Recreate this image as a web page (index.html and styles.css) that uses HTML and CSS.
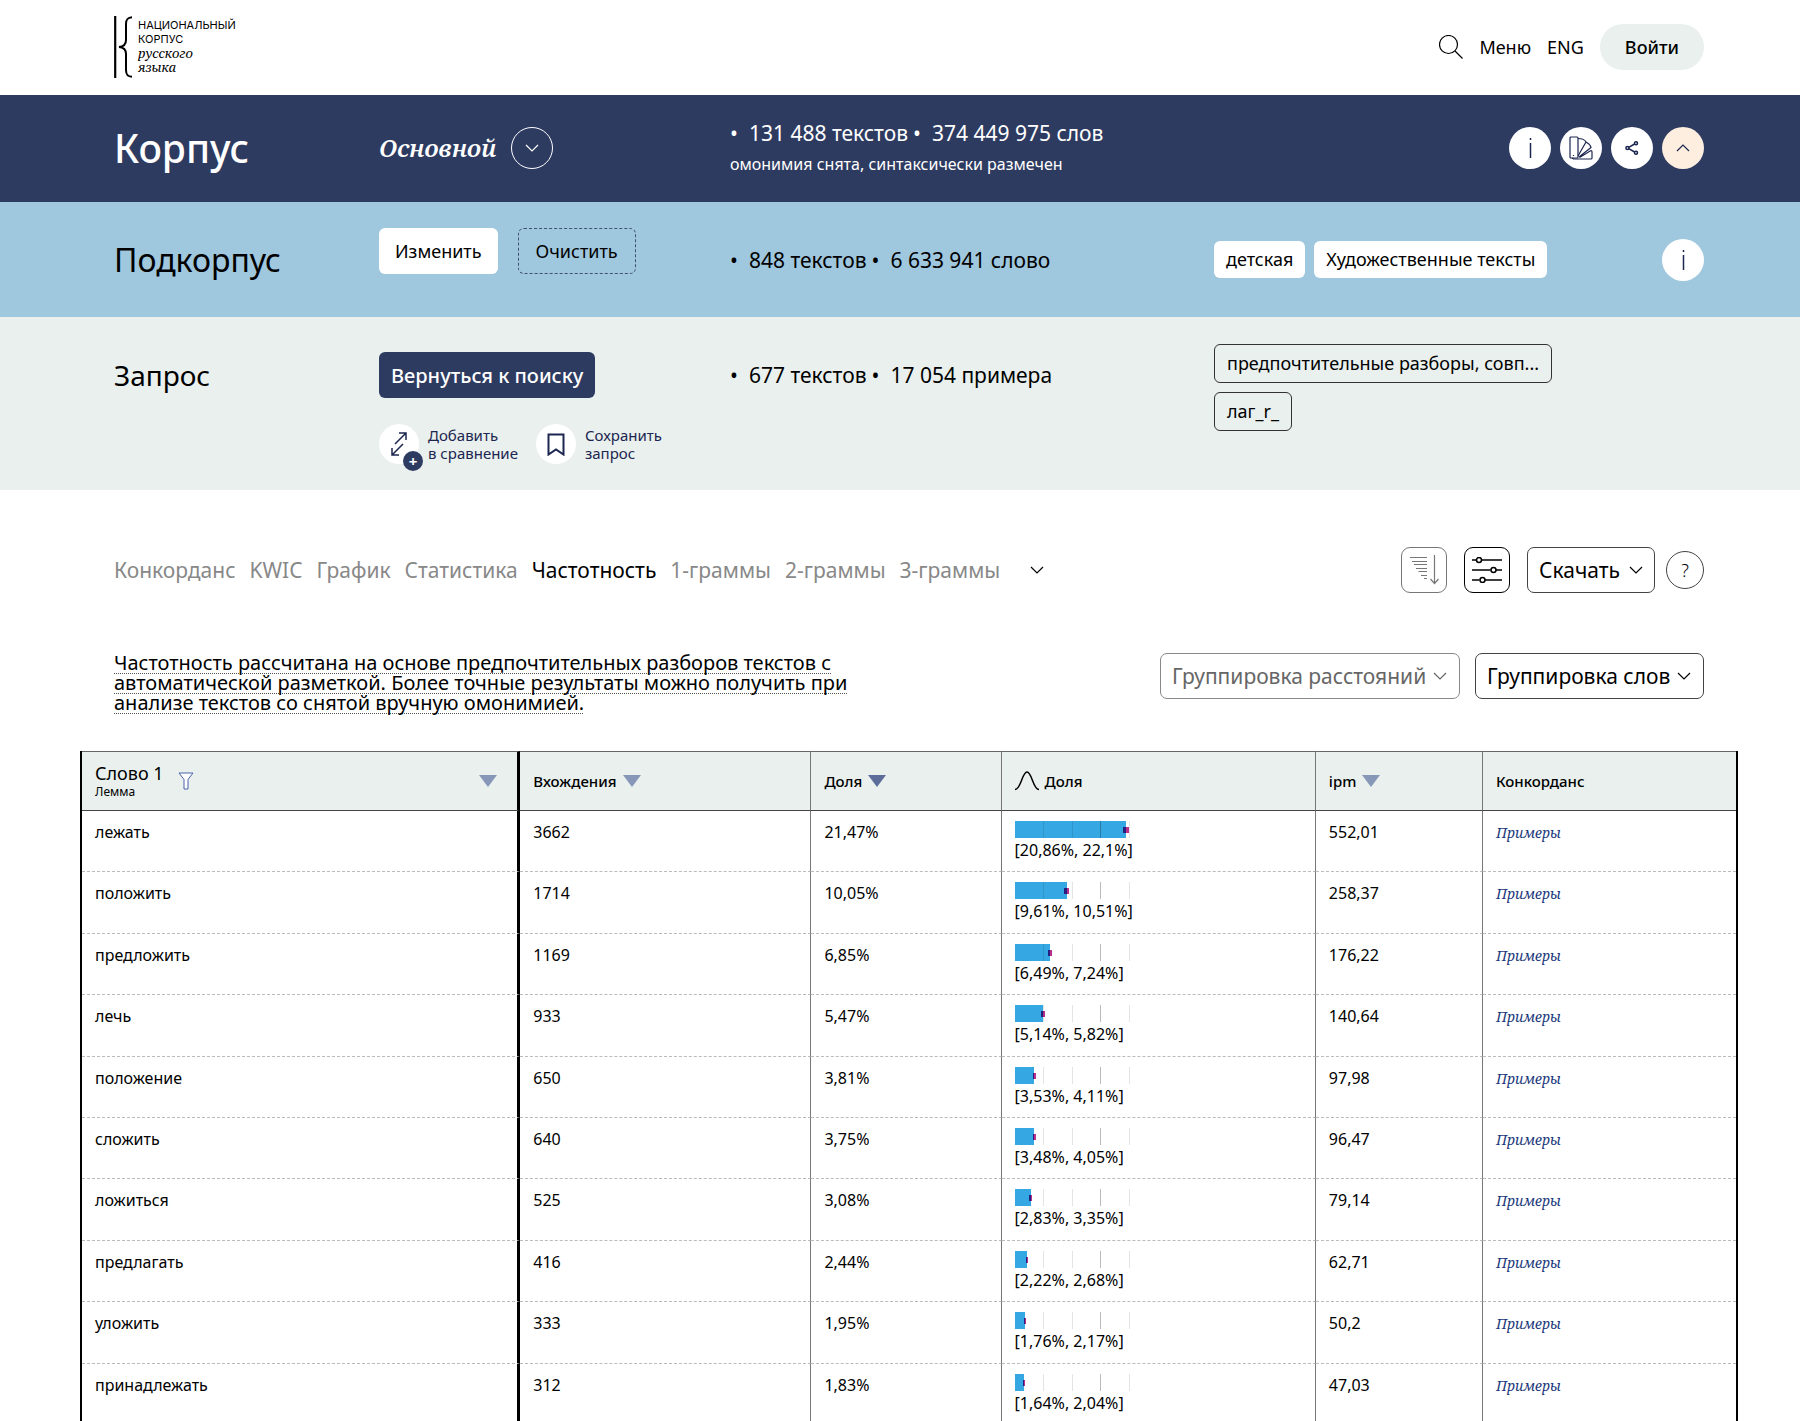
FILE: index.html
```html
<!DOCTYPE html>
<html lang="ru">
<head>
<meta charset="utf-8">
<meta name="viewport" content="width=device-width, initial-scale=1">
<title>Национальный корпус русского языка</title>
<link rel="stylesheet" href="styles.css">
</head>
<body>
<header class="topbar">
  <a class="logo" href="#">
    <svg class="logo-mark" viewBox="0 0 18 62" width="18" height="62" aria-hidden="true"><path d="M1.200 0V62" stroke-width="2.200"/><path d="M19 1.200C13.500 1.200 12 3.500 12 8V24C12 28 10.500 30.500 5 31C10.500 31.500 12 34 12 38V54C12 58.500 13.500 60.800 19 60.800" stroke-width="2"/></svg>
    <span class="logo-text"><span>НАЦИОНАЛЬНЫЙ</span><span>КОРПУС</span><em>русского</em><em>языка</em></span>
  </a>
  <nav class="topnav">
    <a href="#" aria-label="Поиск"><svg class="icon" viewBox="0 0 24 24" width="24" height="24"><circle cx="9.500" cy="9.500" r="9"/><path d="M16 16l7.500 7.500"/></svg></a>
    <a href="#">Меню</a>
    <a href="#">ENG</a>
    <button class="login" type="button">Войти</button>
  </nav>
</header>

<main>
  <section class="band band-corpus">
    <h1 class="title title-lg">Корпус</h1>
    <div class="corpus-name"><em>Основной</em>
      <button class="round round-outline" type="button" aria-label="Выбрать корпус"><svg class="icon" viewBox="0 0 14 8" width="14" height="8"><path d="M1 1l6 6 6-6"/></svg></button>
    </div>
    <div>
      <ul class="stats"><li><span class="dot">•</span>131 488 текстов</li><li><span class="dot">•</span>374 449 975 слов</li></ul>
      <p class="note">омонимия снята, синтаксически размечен</p>
    </div>
    <div class="rounds">
      <button class="round" type="button" aria-label="О корпусе"><svg class="icon icon-mid" viewBox="0 0 4 20" width="4" height="20"><path d="M2.500 5v15M2.500 0v2"/></svg></button>
      <button class="round" type="button" aria-label="Портрет"><svg class="icon" viewBox="0 0 24 24" width="24" height="24"><rect x="1" y="1" width="8" height="21" rx="1"/><path d="M9 2.500C13 2.500 16 4 17 6L9 20M17 6C20 7.500 21.500 9.500 22 11.500L10 21M22 14.500L10.500 21.500M22 14.500Q23 14.500 23 16V22Q23 23 22 23H4.500L3 22M4.500 19v1"/></svg></button>
      <button class="round" type="button" aria-label="Поделиться"><svg class="icon icon-mid" viewBox="0 0 14 14" width="14" height="14"><path d="M9.600 3L3.700 6.300M3.700 7.700l5.900 3.300"/><circle cx="11" cy="2.300" r="1.500"/><circle cx="2.400" cy="7" r="1.500"/><circle cx="11" cy="11.700" r="1.500"/></svg></button>
      <button class="round round-cream" type="button" aria-label="Свернуть"><svg class="icon" viewBox="0 0 14 8" width="14" height="8"><path d="M1 7l6-6 6 6"/></svg></button>
    </div>
  </section>

  <section class="band band-subcorpus">
    <h2 class="title title-md">Подкорпус</h2>
    <div class="sub-actions"><button class="btn btn-white" type="button">Изменить</button><button class="btn btn-dashed" type="button">Очистить</button></div>
    <ul class="stats"><li><span class="dot">•</span>848 текстов</li><li><span class="dot">•</span>6 633 941 слово</li></ul>
    <div class="sub-tags">
      <div class="tags"><span class="tag tag-white">детская</span><span class="tag tag-white">Художественные тексты</span></div>
      <button class="round" type="button" aria-label="О подкорпусе"><svg class="icon icon-mid" viewBox="0 0 4 20" width="4" height="20"><path d="M2.500 5v15M2.500 0v2"/></svg></button>
    </div>
  </section>

  <section class="band band-query">
    <h2 class="title title-sm">Запрос</h2>
    <div class="query-actions">
      <button class="btn btn-navy" type="button">Вернуться к поиску</button>
      <div class="minis">
        <button class="mini" type="button"><span class="mini-icon"><svg class="icon icon-mid" viewBox="0 0 18 26" width="18" height="26"><path d="M5 13L16 2M9 2h7v7M13 13L2 24M2 17v7h7"/></svg><span class="plus">+</span></span><span>Добавить<br>в сравнение</span></button>
        <button class="mini" type="button"><span class="mini-icon"><svg class="icon icon-bold" viewBox="0 0 18 23" width="18" height="23"><path d="M1.500 1.500h15v20L9 16.500l-7.500 5z"/></svg></span><span>Сохранить<br>запрос</span></button>
      </div>
    </div>
    <ul class="stats query-stats"><li><span class="dot">•</span>677 текстов</li><li><span class="dot">•</span>17 054 примера</li></ul>
    <div class="query-tags"><span class="tag tag-line">предпочтительные разборы, совп...</span><span class="tag tag-line">лаг_r_</span></div>
  </section>

  <section class="results">
    <div class="toolbar">
      <nav class="tabs">
        <a href="#">Конкорданс</a><a href="#">KWIC</a><a href="#">График</a><a href="#">Статистика</a><a class="active" href="#" aria-current="page">Частотность</a><a href="#">1-граммы</a><a href="#">2-граммы</a><a href="#">3-граммы</a>
        <button class="more" type="button" aria-label="Ещё"><svg class="icon" viewBox="0 0 14 8" width="14" height="8"><path d="M1 1l6 6 6-6"/></svg></button>
      </nav>
      <div class="tools">
        <button class="tool tool-muted" type="button" aria-label="Сортировка"><svg class="icon" viewBox="0 0 30 30" width="30" height="30"><path d="M1 2.500h17M3 6.500h15M5 9.500h13M7 13.500h11M9.500 16.500h8.500M12 20.500h6M15 23.500h3M25.500 0v28M21.500 24l4 4.500 4-4.500"/></svg></button>
        <button class="tool" type="button" aria-label="Настройки"><svg class="icon icon-mid" viewBox="0 0 30 26" width="30" height="26"><path d="M0 3h4.500M10 3h20M0 13h18.500M24 13h6M0 23h7.500M13 23h17"/><circle cx="7" cy="3" r="2.500"/><circle cx="21.500" cy="13" r="2.500"/><circle cx="10.500" cy="23" r="2.500"/></svg></button>
        <button class="drop" type="button">Скачать<svg class="icon" viewBox="0 0 14 8" width="14" height="8"><path d="M1 1l6 6 6-6"/></svg></button>
        <button class="help" type="button" aria-label="Помощь">?</button>
      </div>
    </div>
    <div class="options">
      <p class="hint"><span>Частотность рассчитана на основе предпочтительных разборов текстов с автоматической разметкой. Более точные результаты можно получить при анализе текстов со снятой вручную омонимией.</span></p>
      <div class="selects">
        <span class="select select-muted"><select aria-label="Группировка расстояний"><option>Группировка расстояний</option></select><svg class="icon" viewBox="0 0 14 8" width="14" height="8"><path d="M1 1l6 6 6-6"/></svg></span>
        <span class="select"><select aria-label="Группировка слов"><option>Группировка слов</option></select><svg class="icon" viewBox="0 0 14 8" width="14" height="8"><path d="M1 1l6 6 6-6"/></svg></span>
      </div>
    </div>
  </section>

  <div class="table-wrap">
  <table class="freq">
    <colgroup><col class="c-word"><col class="c-count"><col class="c-share"><col class="c-chart"><col class="c-ipm"><col class="c-link"></colgroup>
    <thead><tr>
      <th scope="col"><div class="word-head"><span>Слово 1<small>Лемма</small></span><svg class="filter" viewBox="0 0 16 18" width="16" height="18"><path d="M1 1h14l-5 6.500v9.500h-4V7.500z"/></svg><i class="sort"></i></div></th>
      <th scope="col"><div class="head">Вхождения<i class="sort"></i></div></th>
      <th scope="col"><div class="head">Доля<i class="sort sort-on"></i></div></th>
      <th scope="col"><div class="head"><svg class="icon icon-mid" viewBox="0 0 24 20" width="24" height="20"><path d="M0 18.500C6 18.500 7 1 12 1S18 18.500 24 18.500"/></svg>Доля</div></th>
      <th scope="col"><div class="head">ipm<i class="sort"></i></div></th>
      <th scope="col"><div class="head">Конкорданс</div></th>
    </tr></thead>
    <tbody>
      <tr><td>лежать</td><td>3662</td><td>21,47%</td><td><div class="bar" style="--v:21.47;--lo:20.86;--hi:22.1"></div>[20,86%, 22,1%]</td><td>552,01</td><td><a href="#">Примеры</a></td></tr>
      <tr><td>положить</td><td>1714</td><td>10,05%</td><td><div class="bar" style="--v:10.05;--lo:9.61;--hi:10.51"></div>[9,61%, 10,51%]</td><td>258,37</td><td><a href="#">Примеры</a></td></tr>
      <tr><td>предложить</td><td>1169</td><td>6,85%</td><td><div class="bar" style="--v:6.85;--lo:6.49;--hi:7.24"></div>[6,49%, 7,24%]</td><td>176,22</td><td><a href="#">Примеры</a></td></tr>
      <tr><td>лечь</td><td>933</td><td>5,47%</td><td><div class="bar" style="--v:5.47;--lo:5.14;--hi:5.82"></div>[5,14%, 5,82%]</td><td>140,64</td><td><a href="#">Примеры</a></td></tr>
      <tr><td>положение</td><td>650</td><td>3,81%</td><td><div class="bar" style="--v:3.81;--lo:3.53;--hi:4.11"></div>[3,53%, 4,11%]</td><td>97,98</td><td><a href="#">Примеры</a></td></tr>
      <tr><td>сложить</td><td>640</td><td>3,75%</td><td><div class="bar" style="--v:3.75;--lo:3.48;--hi:4.05"></div>[3,48%, 4,05%]</td><td>96,47</td><td><a href="#">Примеры</a></td></tr>
      <tr><td>ложиться</td><td>525</td><td>3,08%</td><td><div class="bar" style="--v:3.08;--lo:2.83;--hi:3.35"></div>[2,83%, 3,35%]</td><td>79,14</td><td><a href="#">Примеры</a></td></tr>
      <tr><td>предлагать</td><td>416</td><td>2,44%</td><td><div class="bar" style="--v:2.44;--lo:2.22;--hi:2.68"></div>[2,22%, 2,68%]</td><td>62,71</td><td><a href="#">Примеры</a></td></tr>
      <tr><td>уложить</td><td>333</td><td>1,95%</td><td><div class="bar" style="--v:1.95;--lo:1.76;--hi:2.17"></div>[1,76%, 2,17%]</td><td>50,2</td><td><a href="#">Примеры</a></td></tr>
      <tr><td>принадлежать</td><td>312</td><td>1,83%</td><td><div class="bar" style="--v:1.83;--lo:1.64;--hi:2.04"></div>[1,64%, 2,04%]</td><td>47,03</td><td><a href="#">Примеры</a></td></tr>
    </tbody>
  </table>
  </div>
</main>
</body>
</html>
```

FILE: styles.css
```css
:root {
  --navy: #2e3b61;
  --sky: #9fc7de;
  --mist: #e9f0ee;
  --ink: #000;
  --gutter-left: 114px;
  --gutter-right: 96px;
  --sans: "Noto Sans", sans-serif;
  --serif: "Noto Serif", "PT Serif", "Liberation Serif", serif;
}

* { box-sizing: border-box; }

body {
  margin: 0;
  height: 100vh;
  overflow-x: hidden;
  overflow-y: auto;
  scrollbar-width: none;
  background: #fff;
  color: var(--ink);
  font-family: var(--sans);
  font-size: 16px;
}

h1, h2, p, ul { margin: 0; padding: 0; }
a { color: inherit; text-decoration: none; }
button, select { font: inherit; color: inherit; cursor: pointer; }
button { border: 0; padding: 0; background: none; white-space: nowrap; }
svg { display: block; flex: none; }
.icon { fill: none; stroke: currentColor; stroke-width: 1.2; }
.icon-mid { stroke-width: 1.5; }
.icon-bold { stroke-width: 2; }

/* Header */
.topbar {
  display: flex;
  justify-content: space-between;
  padding: 16px var(--gutter-right) 16px var(--gutter-left);
}
.logo { display: flex; gap: 6px; }
.logo-mark { fill: none; stroke: #000; margin-bottom: 1px; }
.logo-text {
  display: flex;
  flex-direction: column;
  padding-top: 2px;
  font-family: Inter, "Liberation Sans", sans-serif;
  font-size: 11px;
  line-height: 14px;
}
.logo-text em { font-family: var(--serif); font-size: 13px; }
.topnav { display: flex; align-items: center; gap: 16px; padding-bottom: 2px; font-size: 18px; }
.login {
  padding: 0 25px;
  border-radius: 23px;
  background: var(--mist);
  font-weight: 500;
  line-height: 46px;
}

/* Corpus, subcorpus and query bands */
.band {
  display: grid;
  grid-template-columns: 265fr 351fr 484fr 490fr;
  align-items: center;
  padding: 0 var(--gutter-right) 0 var(--gutter-left);
}
.title { font-weight: 400; }
.title-lg { font-size: 39px; line-height: 54px; font-weight: 500; }
.title-md { font-size: 32px; line-height: 44px; }
.title-sm { font-size: 28px; line-height: 48px; }

.band-corpus { padding-top: 22px; padding-bottom: 23px; background: var(--navy); color: #fff; }
.corpus-name { display: flex; align-items: center; gap: 15px; }
.corpus-name em { font: italic 600 24px/42px var(--serif); }
.stats { display: flex; gap: 5px; list-style: none; font-size: 21px; line-height: 32px; white-space: nowrap; }
.dot { margin-right: 11px; }
.note { font-size: 16px; line-height: 30px; }
.rounds { display: flex; justify-content: flex-end; gap: 9px; }
.round {
  display: grid;
  place-items: center;
  flex: none;
  width: 42px;
  height: 42px;
  border-radius: 50%;
  background: #fff;
  color: #1c2650;
}
.round-outline { border: 1px solid #fff; background: none; color: #fff; }
.round-cream { background: #fdeee0; }

.band-subcorpus { padding-top: 26px; padding-bottom: 26px; background: var(--sky); }
.sub-actions { display: flex; gap: 20px; padding-bottom: 17px; }
.btn { height: 46px; border-radius: 6px; font-size: 18px; }
.btn-white { padding: 0 16px; background: #fff; }
.btn-dashed { padding: 0 17px; border: 1px dashed #44506f; }
.sub-tags { display: flex; justify-content: space-between; align-items: center; }
.tags { display: flex; gap: 9px; }
.tag { border-radius: 6px; font-size: 18px; white-space: nowrap; }
.tag-white { padding: 0 12px; background: #fff; line-height: 37px; }

.band-query { align-items: start; padding-top: 27px; padding-bottom: 24px; background: var(--mist); }
.title-sm, .query-stats { margin-top: 7px; }
.query-stats { line-height: 48px; }
.query-actions { padding-top: 8px; }
.btn-navy { padding: 0 12px; background: var(--navy); color: #fff; font-size: 20px; font-weight: 500; }
.minis { display: flex; gap: 18px; padding-top: 24px; color: #1c2650; }
.mini { display: flex; align-items: center; gap: 9px; font-size: 15px; line-height: 18px; text-align: left; }
.mini-icon {
  position: relative;
  display: grid;
  place-items: center;
  width: 40px;
  height: 40px;
  margin: 2px 0;
  border-radius: 20px;
  background: #fff;
}
.plus {
  position: absolute;
  right: -4px;
  bottom: -7px;
  width: 20px;
  border-radius: 10px;
  background: var(--navy);
  color: #fff;
  font-weight: 700;
  line-height: 20px;
  text-align: center;
}
.query-tags { display: flex; flex-direction: column; align-items: flex-start; gap: 9px; }
.tag-line { padding: 0 12px; border: 1px solid #333; line-height: 37px; }

/* Result tabs and options */
.results { padding: 57px var(--gutter-right) 0 var(--gutter-left); }
.toolbar, .tabs, .tools, .selects { display: flex; align-items: center; }
.toolbar { justify-content: space-between; }
.tabs { gap: 14px; color: #888; font-size: 21px; line-height: 28px; white-space: nowrap; }
.tabs .active { color: #000; }
.more { margin-left: 16px; color: #000; }
.tool {
  display: grid;
  place-items: center;
  width: 46px;
  height: 46px;
  margin-right: 17px;
  border: 1px solid #000;
  border-radius: 9px;
}
.tool-muted { border-color: #777; color: #777; }
.drop, .select {
  display: flex;
  align-items: center;
  height: 46px;
  border: 1px solid #444;
  border-radius: 7px;
  font-size: 21px;
}
.drop { gap: 9px; padding: 0 11px; }
.help { width: 38px; height: 38px; margin-left: 11px; border: 1px solid #444; border-radius: 50%; font-size: 18px; font-weight: 300; }
.options { display: flex; justify-content: space-between; align-items: center; gap: 40px; padding-top: 58px; }
.hint { max-width: 740px; padding-top: 2px; font-size: 20px; line-height: 20px; }
.hint span { text-decoration: underline dotted 1px #555; text-underline-offset: 3px; text-decoration-skip-ink: none; }
.selects { flex: none; gap: 15px; padding-bottom: 12px; }
.select { position: relative; }
.select select { appearance: none; height: 44px; padding: 0 32px 0 11px; border: 0; background: none; }
.select .icon { position: absolute; right: 12px; pointer-events: none; }
.select-muted { border-color: #888; color: #666; }

/* Frequency table */
.table-wrap { padding: 38px 62px 0 80px; }
.freq {
  width: 100%;
  table-layout: fixed;
  border-collapse: separate;
  border-spacing: 0;
  border-left: 2px solid #000;
  border-right: 2px solid #000;
  line-height: 1.4;
}
.c-word { width: 26.500%; }
.c-count { width: 17.600%; }
.c-share { width: 11.500%; }
.c-chart { width: 19%; }
.c-ipm { width: 10.100%; }
.freq th, .freq td { padding: 0 13px; border-right: 1px solid #777; text-align: left; vertical-align: top; }
.freq th { height: 60px; border-top: 1px solid #666; border-bottom: 1px solid #444; background: var(--mist); font-size: 15px; font-weight: 500; vertical-align: middle; }
.freq td { padding-top: 10px; padding-bottom: 10px; border-bottom: 1px dashed #bbb; }
.freq th:first-child, .freq td:first-child { border-right: 3px solid #000; }
.freq th:last-child, .freq td:last-child { border-right: 0; }
.freq td a { color: #1d3a7c; font-family: var(--serif); font-size: 14px; font-style: italic; }
.head { display: flex; align-items: center; gap: 6px; }
.word-head { display: flex; align-items: center; gap: 14px; padding-right: 7px; font-size: 18px; font-weight: 400; line-height: 22px; }
.word-head small { display: block; font-size: 12px; line-height: 16px; }
.word-head .sort { margin-left: auto; }
.filter { fill: #fff; stroke: #4a62a8; }
.sort { border: 9px solid transparent; border-top: 12px solid #8797b8; border-bottom: 0; }
.sort-on { border-top-color: #5d6d9a; }

/* Share bar: the full width stands for 22.16% */
.bar {
  position: relative;
  isolation: isolate;
  width: 115px;
  height: 17px;
  margin-bottom: 1px;
  background:
    linear-gradient(#e4e4e4, #e4e4e4) 25% 0 / 1px 100% no-repeat,
    linear-gradient(#e4e4e4, #e4e4e4) 50% 0 / 1px 100% no-repeat,
    linear-gradient(#bbb, #bbb) 75% 0 / 1px 100% no-repeat,
    linear-gradient(#e4e4e4, #e4e4e4) 100% 0 / 1px 100% no-repeat;
}
.bar::before, .bar::after { content: ""; position: absolute; mix-blend-mode: multiply; }
.bar::before { inset: 0 auto 0 0; width: calc(var(--v) / 22.16 * 100%); background: #35a7e3; }
.bar::after { top: 6px; height: 6px; left: calc(var(--lo) / 22.16 * 100%); width: calc((var(--hi) - var(--lo)) / 22.16 * 100%); background: #b9308c; }
```
